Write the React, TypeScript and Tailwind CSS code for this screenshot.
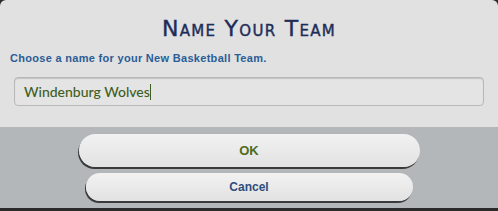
export default function App() {
  return (
    <div className="w-[498px] h-[211px] bg-[#2b2b2b] overflow-hidden" style={{ fontFamily: '"Liberation Sans", Arial, sans-serif' }}>
      <div className="flex flex-col h-[208px] rounded-t-[6px] overflow-hidden">
        <div className="h-[127px] bg-[#e1e1e1] flex flex-col px-[10px]">
          <h1 className="mt-[16px] text-center text-[22px] leading-[26px] text-[#1d2d58] [font-variant:small-caps] tracking-[1.3px] [-webkit-text-stroke:0.4px_#1d2d58] font-['DejaVu_Sans',sans-serif]">
            Name Your Team
          </h1>
          <p className="mt-[9px] text-[11px] leading-[14px] font-bold tracking-[0.3px] text-[#2b5d97]">
            Choose a name for your New Basketball Team.
          </p>
          <div className="mt-[12px] mx-[4px] h-[29px] rounded-[4px] border border-[#b8b8b8] bg-[#e4e4e4] shadow-[inset_0_1px_1px_rgba(0,0,0,0.15)] flex items-center px-[9px]">
            <span className="text-[14px] font-medium text-[#3f5e22] font-['Lato',sans-serif]">Windenburg Wolves</span>
            <span className="w-px h-[16px] bg-[#3f5e22]" />
          </div>
        </div>
        <div className="flex-1 bg-[#b3b7ba] flex flex-col items-center pt-[7px] gap-[6px]">
          <button className="w-[341px] h-[33px] rounded-full bg-gradient-to-b from-[#f2f2f2] to-[#e2e2e2] shadow-[-1px_2px_0_#3a3a3a] text-[13px] font-bold text-[#4e6c1c]">
            OK
          </button>
          <button className="w-[327px] h-[28px] rounded-full bg-gradient-to-b from-[#f2f2f2] to-[#e2e2e2] shadow-[-1px_2px_0_#3a3a3a] text-[12px] font-bold text-[#2f4d7c]">
            Cancel
          </button>
        </div>
      </div>
    </div>
  )
}
